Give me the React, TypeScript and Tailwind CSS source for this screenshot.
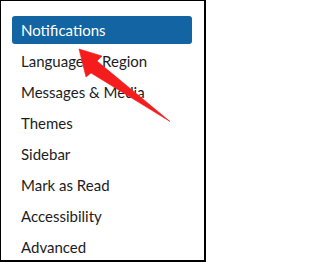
const items = [
  "Notifications",
  "Language & Region",
  "Messages & Media",
  "Themes",
  "Sidebar",
  "Mark as Read",
  "Accessibility",
  "Advanced",
];

const App: React.FC = () => {
  const active = "Notifications";

  return (
    <div className="relative w-[206px] h-[262px] bg-white font-['Lato','Liberation_Sans',sans-serif]">
      <div className="h-full w-full border-t border-l border-r-2 border-b-2 border-black pl-[11px] pt-[15px]">
        <ul className="flex w-[180px] flex-col gap-[3px]">
          {items.map((item) => (
            <li
              key={item}
              className={
                item === active
                  ? "flex h-[28px] items-center rounded-[3px] bg-[#1264a3] pl-[9px] text-[15px] text-white"
                  : "flex h-[28px] items-center pl-[9px] text-[15px] text-[#1d1c1d]"
              }
            >
              {item}
            </li>
          ))}
        </ul>
      </div>
      {/* red callout arrow */}
      <svg className="absolute left-0 top-0" width="206" height="262" viewBox="0 0 206 262">
        <polygon
          points="79,49 102,56 97,61 170,121.5 91,73 86,77"
          fill="#f41c1c"
          stroke="#f41c1c"
          strokeWidth="0.6"
          strokeLinejoin="round"
        />
      </svg>
    </div>
  );
};

export default App;
